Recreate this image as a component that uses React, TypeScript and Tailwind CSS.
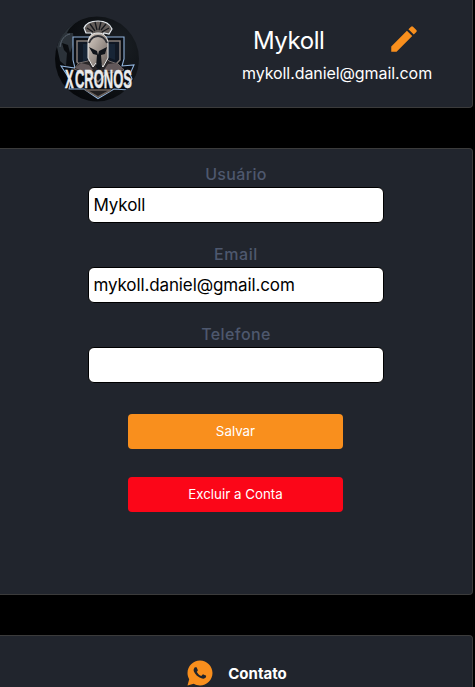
import { MdEdit } from "react-icons/md";
import { RiWhatsappFill } from "react-icons/ri";

function Logo() {
  return (
    <svg viewBox="0 0 84 86" className="h-[86px] w-[84px] shrink-0 overflow-visible" aria-label="Xcronos">
      <defs>
        <radialGradient id="disc" cx="75%" cy="35%" r="75%">
          <stop offset="0" stopColor="#1a1f24" />
          <stop offset="1" stopColor="#07090c" />
        </radialGradient>
        <linearGradient id="metal" x1="0" y1="0" x2="1" y2="1">
          <stop offset="0" stopColor="#d8cec5" />
          <stop offset="1" stopColor="#665d59" />
        </linearGradient>
        <clipPath id="round"><ellipse cx="42" cy="43" rx="42" ry="42.5" /></clipPath>
      </defs>
      <g clipPath="url(#round)">
        <rect width="84" height="86" fill="url(#disc)" />
        <path d="M3 23C8 11 16 3 26 0l1 3C19 7 14 12 12 17l6 0 1 9-4 11-2-8-6-2 2 7 3 3-1 13-6-5-3-14z" fill="#2b3239" />
        <path d="M4 24C9 13 17 6 26 2M5 31c1-8 5-12 10-13" fill="none" stroke="#59636e" strokeWidth="1" />
        <path d="M18 21h13l4 0h16l4 0h14v22l-2 7 12-1-4 9 2 5-4 5 0 6-14-1L43 82.500 29 73H14l2-8-10-15 14 2-2-8z" fill="#090d13" stroke="#91b4dc" strokeWidth="1.1" />
        <path d="M22 25h13l8-4 9 4h13v19L43 66 22 46z" fill="#101824" stroke="#857d79" strokeWidth="1.5" />
        <path d="M28 28h7v14l-7 4zm25 0h7v16l-7-3z" fill="#172536" />
        <path d="M19 53l5-6 9-2 4-5 6 11 6-11 5 5 9 3 6 6-14 3H29z" fill="#292628" stroke="#8b8380" strokeWidth=".8" />
        <path d="M20 52l6-5 8 2 4 5-9 2zm49 1l-8-6-8 1-4 6 10 2z" fill="#62585a" />
        <path d="M31 17l-2-5C31 7 36 5 43 5s12 3 14 8l-3 5-5-1-2 3h-8l-3-3z" fill="#625c59" stroke="#e2e8ed" strokeWidth="1.2" />
        <path d="M32 12l6 4m-3-8 5 7m0-9 2 8m4-8-2 8m7-6-5 6m8-2-7 4" stroke="#15181d" strokeWidth="1.3" />
        <path d="M33 28c0-8 4-11 10-11s10 4 10 11v14l-5 9-3-4-2 3-2-3-3 4-5-9z" fill="url(#metal)" stroke="#e8e9e9" strokeWidth="1" />
        <path d="M34 31l8 4 1 4 1-4 8-4-2 7-4 1 1 12-3 3-3-3 1-12-4-1z" fill="#11151b" />
        <path d="M34 27c2-5 5-7 9-7s7 2 9 7" fill="none" stroke="#303136" strokeWidth="2" />
        <path d="M31 74h25L43 81z" fill="#211f20" stroke="#6b615b" strokeWidth="1.5" />
      </g>
      <text x="10" y="72" fontFamily="Liberation Sans, sans-serif" fontSize="26" fontWeight="700" fill="#e9eaec" stroke="#e9eaec" strokeWidth=".5" textLength="67" lengthAdjust="spacingAndGlyphs">X<tspan dx="2.500">CRONOS</tspan></text>
    </svg>
  );
}

function Field({ label, value, labelClass }: { label: string; value: string; labelClass: string }) {
  return (
    <label className="flex h-20 w-[296px] flex-col items-center">
      <span className={`h-[25px] text-base leading-6 font-medium text-[#4e586e] ${labelClass}`}>{label}</span>
      <input
        defaultValue={value}
        className="h-9 w-full rounded-md border border-black bg-white px-[4.5px] text-[17px] tracking-[-0.12px] text-black outline-none"
      />
    </label>
  );
}

export default function App() {
  return (
    <div className="h-[687px] overflow-hidden bg-black font-['Inter',sans-serif] text-white">
      <header className="flex h-[108px] w-[473px] rounded-br border-r border-b border-[#3b3b3b] bg-[#21252d] pt-4 pl-[55px]">
        <Logo />
        <div className="ml-[103px] w-[190px] pt-1.5">
          <div className="flex h-9 items-start justify-between pr-[11px] pl-[11px]">
            <h1 className="text-2xl leading-[38px] tracking-[-0.45px]">Mykoll</h1>
            <MdEdit className="size-[34px] shrink-0 text-[#f98f1d]" />
          </div>
          <p className="text-base leading-[30px] tracking-[-0.08px] whitespace-nowrap">mykoll.daniel@gmail.com</p>
        </div>
      </header>

      <main className="mt-10 flex h-[447px] w-[473px] flex-col items-center rounded-r border-y border-r border-[#3b3b3b] bg-[#21252d] pt-[13px]">
        <Field label="Usuário" value="Mykoll" labelClass="tracking-[0.35px]" />
        <Field label="Email" value="mykoll.daniel@gmail.com" labelClass="tracking-[0.6px]" />
        <Field label="Telefone" value="" labelClass="tracking-[0.4px]" />
        <button className="mt-3 mr-px h-[35px] w-[215px] rounded bg-[#f98f1d] text-[13.333px]">Salvar</button>
        <button className="mt-7 mr-px h-[35px] w-[215px] rounded bg-[#fb0618] text-[13.333px]">Excluir a Conta</button>
      </main>

      <footer className="mt-10 flex h-20 w-[473px] justify-center rounded-tr border-t border-r border-[#3b3b3b] bg-[#21252d] pt-[22px]">
        <div className="flex h-[30px] items-center gap-[13px]">
          <RiWhatsappFill className="size-[30px] text-[#f98f1d]" />
          <span className="pt-0.5 text-[15px] font-bold">Contato</span>
        </div>
      </footer>
    </div>
  );
}
